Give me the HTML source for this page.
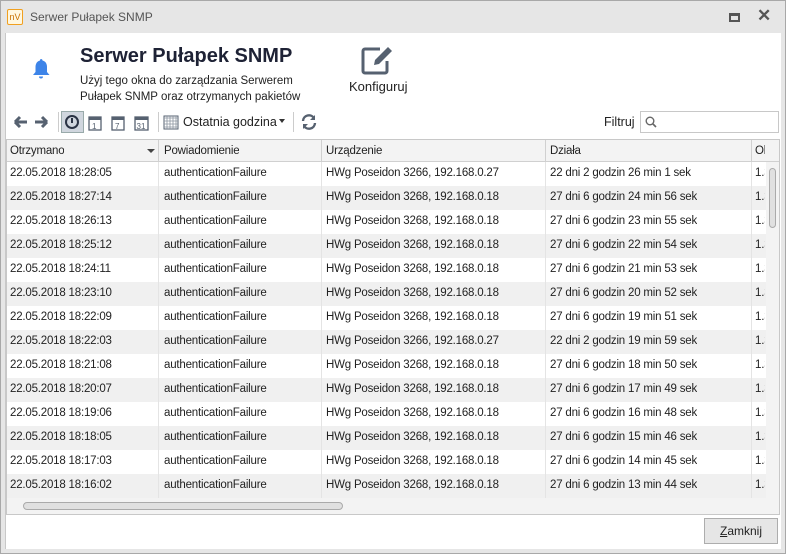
<!DOCTYPE html>
<html><head><meta charset="utf-8"><style>
*{box-sizing:border-box;margin:0;padding:0}
body{width:786px;height:554px;overflow:hidden;background:#e6e6e6;font-family:"Liberation Sans",sans-serif;color:#222;position:relative}
.win{position:absolute;left:0;top:0;width:786px;height:554px;border:1px solid #a8a8a8}
.title{position:absolute;left:30px;top:10px;font-size:12px;color:#555}
.logo{position:absolute;left:7px;top:9px;width:16px;height:16px;border:1px solid #f0a020;border-radius:2px;background:#fff7e0;font-size:9px;color:#c87000;text-align:center;line-height:14px}
.body{position:absolute;left:5px;top:33px;width:776px;height:516px;background:#fff;border-left:1px solid #c8c8c8}
.abs{position:absolute}
.h1{left:74px;top:12px;font-size:20px;font-weight:bold;color:#1e2235}
.sub{left:74px;top:40px;font-size:11.5px;line-height:16px;color:#222}
.tbl{position:absolute;left:0;top:106px;width:774px;height:376px;border:1px solid #c8c8c8;overflow:hidden}
.hdr{position:absolute;top:0;left:0;height:22px;width:772px;background:#f3f3f3;border-bottom:1px solid #d0d0d0}
.c{position:absolute;font-size:11.5px;white-space:nowrap;overflow:hidden;letter-spacing:-0.2px}
.row{position:absolute;left:0;width:760px;height:24px}
.row .c{top:5px}
.vl{position:absolute;top:0;width:1px;height:360px;background:#e4e4e4}
</style></head><body>
<div class="win"></div>
<div class="logo">nV</div>
<div class="title">Serwer Pułapek SNMP</div>
<div class="abs" style="left:729px;top:13px;width:11px;height:9px;border:2px solid #555;border-top-width:3px"></div>
<div class="abs" style="left:757px;top:6px;font-size:17px;font-weight:bold;color:#555">✕</div>
<div class="body">
 <svg class="abs" style="left:26px;top:25px" width="18" height="22" viewBox="0 0 18 22"><path d="M9 1c1 0 1.5.7 1.5 1.5 3 .8 4.5 3.2 4.5 6.5v5l2.5 3H1l2.5-3V9c0-3.3 1.5-5.7 4.5-6.5C8 1.7 8.3 1 9 1z" fill="#3d84e8"/><path d="M7 18.5h4a2 2 0 0 1-4 0z" fill="#3d84e8"/></svg>
 <div class="abs h1">Serwer Pułapek SNMP</div>
 <div class="abs sub">Użyj tego okna do zarządzania Serwerem<br>Pułapek SNMP oraz otrzymanych pakietów</div>
 <svg class="abs" style="left:354px;top:12px" width="36" height="32" viewBox="0 0 36 32"><path d="M20 4H5a2 2 0 0 0-2 2v20a2 2 0 0 0 2 2h20a2 2 0 0 0 2-2V16" fill="none" stroke="#566170" stroke-width="3"/><path d="M28 2l4 4-13 13-5 1 1-5z" fill="#566170"/></svg>
 <div class="abs" style="left:343px;top:46px;font-size:13px">Konfiguruj</div>
 <svg class="abs" style="left:7px;top:81px" width="50" height="16" viewBox="0 0 50 16"><path d="M2 8h12M2 8l5-5M2 8l5 5" stroke="#566170" stroke-width="3" fill="none"/><path d="M22 8h12M34 8l-5-5M34 8l-5 5" stroke="#566170" stroke-width="3" fill="none"/></svg>
 <div class="abs" style="left:52px;top:79px;width:1px;height:20px;background:#ccc"></div>
 <div class="abs" style="left:55px;top:78px;width:23px;height:22px;background:#d0d6de;border:1px solid #9aa"></div>
 <svg class="abs" style="left:59px;top:82px" width="16" height="16"><circle cx="7" cy="7" r="6" fill="none" stroke="#2a3344" stroke-width="2"/><path d="M7 3v5" stroke="#2a3344" stroke-width="2"/></svg>
 <svg class="abs" style="left:82px;top:81px" width="70" height="17" viewBox="0 0 70 17"><g fill="none" stroke="#566170" stroke-width="1.3"><rect x="1" y="3" width="12" height="13"/><rect x="24" y="3" width="12" height="13"/><rect x="47" y="3" width="13" height="13"/></g><g fill="#566170"><rect x="1" y="3" width="12" height="3"/><rect x="24" y="3" width="12" height="3"/><rect x="47" y="3" width="13" height="3"/></g><g font-size="8" fill="#566170" font-family="Liberation Sans"><text x="4" y="15">1</text><text x="27" y="15">7</text><text x="48.5" y="15">31</text></g></svg>
 <div class="abs" style="left:152px;top:79px;width:1px;height:20px;background:#ccc"></div>
 <svg class="abs" style="left:157px;top:81px" width="16" height="16"><rect x="1" y="2" width="14" height="13" fill="none" stroke="#566170"/><path d="M1 4h14M1 7h14M1 10h14M1 13h14M4 2v13M7 2v13M10 2v13M13 2v13" stroke="#8a94a0" stroke-width=".8"/></svg>
 <div class="abs" style="left:177px;top:82px;font-size:12.5px">Ostatnia godzina</div>
 <div class="abs" style="left:273px;top:86px;border:3px solid transparent;border-top:4px solid #333"></div>
 <div class="abs" style="left:287px;top:79px;width:1px;height:20px;background:#ccc"></div>
 <svg class="abs" style="left:295px;top:81px" width="16" height="16" viewBox="0 0 16 16"><path d="M2 7a6 6 0 0 1 11-3M14 9a6 6 0 0 1-11 3" fill="none" stroke="#566170" stroke-width="2.4"/><path d="M14 1v5h-5zM2 15v-5h5z" fill="#566170"/></svg>
 <div class="abs" style="left:598px;top:82px;font-size:12.5px">Filtruj</div>
 <div class="abs" style="left:634px;top:78px;width:139px;height:22px;border:1px solid #c8c8c8"></div>
 <svg class="abs" style="left:639px;top:83px" width="12" height="12"><circle cx="5" cy="5" r="3.8" fill="none" stroke="#666" stroke-width="1.4"/><path d="M8 8l3 3" stroke="#666" stroke-width="1.6"/></svg>
 <div class="tbl">
  <div class="hdr">
   <div class="c" style="left:3px;top:5px">Otrzymano</div>
   <div class="abs" style="left:140px;top:9px;border:4px solid transparent;border-top:4px solid #444"></div>
   <div class="c" style="left:157px;top:5px">Powiadomienie</div>
   <div class="c" style="left:319px;top:5px">Urządzenie</div>
   <div class="c" style="left:543px;top:5px">Działa</div>
   <div class="c" style="left:748px;top:5px;width:10px">Ol</div>
   <div class="abs" style="left:151px;top:0;width:1px;height:22px;background:#d0d0d0"></div>
   <div class="abs" style="left:314px;top:0;width:1px;height:22px;background:#d0d0d0"></div>
   <div class="abs" style="left:538px;top:0;width:1px;height:22px;background:#d0d0d0"></div>
   <div class="abs" style="left:744px;top:0;width:1px;height:22px;background:#d0d0d0"></div>
  </div>
  <div style="position:absolute;left:0;top:22px;width:760px;height:336px">
  </div>
  <div class="abs" style="left:759px;top:22px;width:13px;height:336px;background:#f3f3f3"></div>
  <div class="abs" style="left:762px;top:28px;width:7px;height:60px;background:#e0e0e0;border:1px solid #aaa;border-radius:4px"></div>
  <div class="abs" style="left:0;top:358px;width:772px;height:16px;background:#f3f3f3"></div>
  <div class="abs" style="left:16px;top:362px;width:320px;height:8px;background:#e0e0e0;border:1px solid #aaa;border-radius:4px"></div>
 </div>
 <div class="abs" style="left:698px;top:485px;width:74px;height:26px;background:#e6e6e6;border:1px solid #adadad;font-size:12px;text-align:center;line-height:24px"><u>Z</u>amknij</div>
</div>
<script>
const d=[["18:28:05","3266, 192.168.0.27","22 dni 2 godzin 26 min 1 sek"],["18:27:14","3268, 192.168.0.18","27 dni 6 godzin 24 min 56 sek"],["18:26:13","3268, 192.168.0.18","27 dni 6 godzin 23 min 55 sek"],["18:25:12","3268, 192.168.0.18","27 dni 6 godzin 22 min 54 sek"],["18:24:11","3268, 192.168.0.18","27 dni 6 godzin 21 min 53 sek"],["18:23:10","3268, 192.168.0.18","27 dni 6 godzin 20 min 52 sek"],["18:22:09","3268, 192.168.0.18","27 dni 6 godzin 19 min 51 sek"],["18:22:03","3266, 192.168.0.27","22 dni 2 godzin 19 min 59 sek"],["18:21:08","3268, 192.168.0.18","27 dni 6 godzin 18 min 50 sek"],["18:20:07","3268, 192.168.0.18","27 dni 6 godzin 17 min 49 sek"],["18:19:06","3268, 192.168.0.18","27 dni 6 godzin 16 min 48 sek"],["18:18:05","3268, 192.168.0.18","27 dni 6 godzin 15 min 46 sek"],["18:17:03","3268, 192.168.0.18","27 dni 6 godzin 14 min 45 sek"],["18:16:02","3268, 192.168.0.18","27 dni 6 godzin 13 min 44 sek"]];
let h='';d.forEach((r,i)=>{h+=`<div class="row" style="top:${i*24}px;background:${i%2?'#f0f0f0':'#fff'}"><div class="c" style="left:3px">22.05.2018 ${r[0]}</div><div class="c" style="left:157px">authenticationFailure</div><div class="c" style="left:319px">HWg Poseidon ${r[1]}</div><div class="c" style="left:543px">${r[2]}</div><div class="c" style="left:748px;width:10px">1.3</div></div>`});
h+='<div class="vl" style="left:151px"></div><div class="vl" style="left:314px"></div><div class="vl" style="left:538px"></div><div class="vl" style="left:744px"></div>';
document.querySelector('.tbl > div:nth-child(2)').innerHTML=h;
</script>
</body></html>
